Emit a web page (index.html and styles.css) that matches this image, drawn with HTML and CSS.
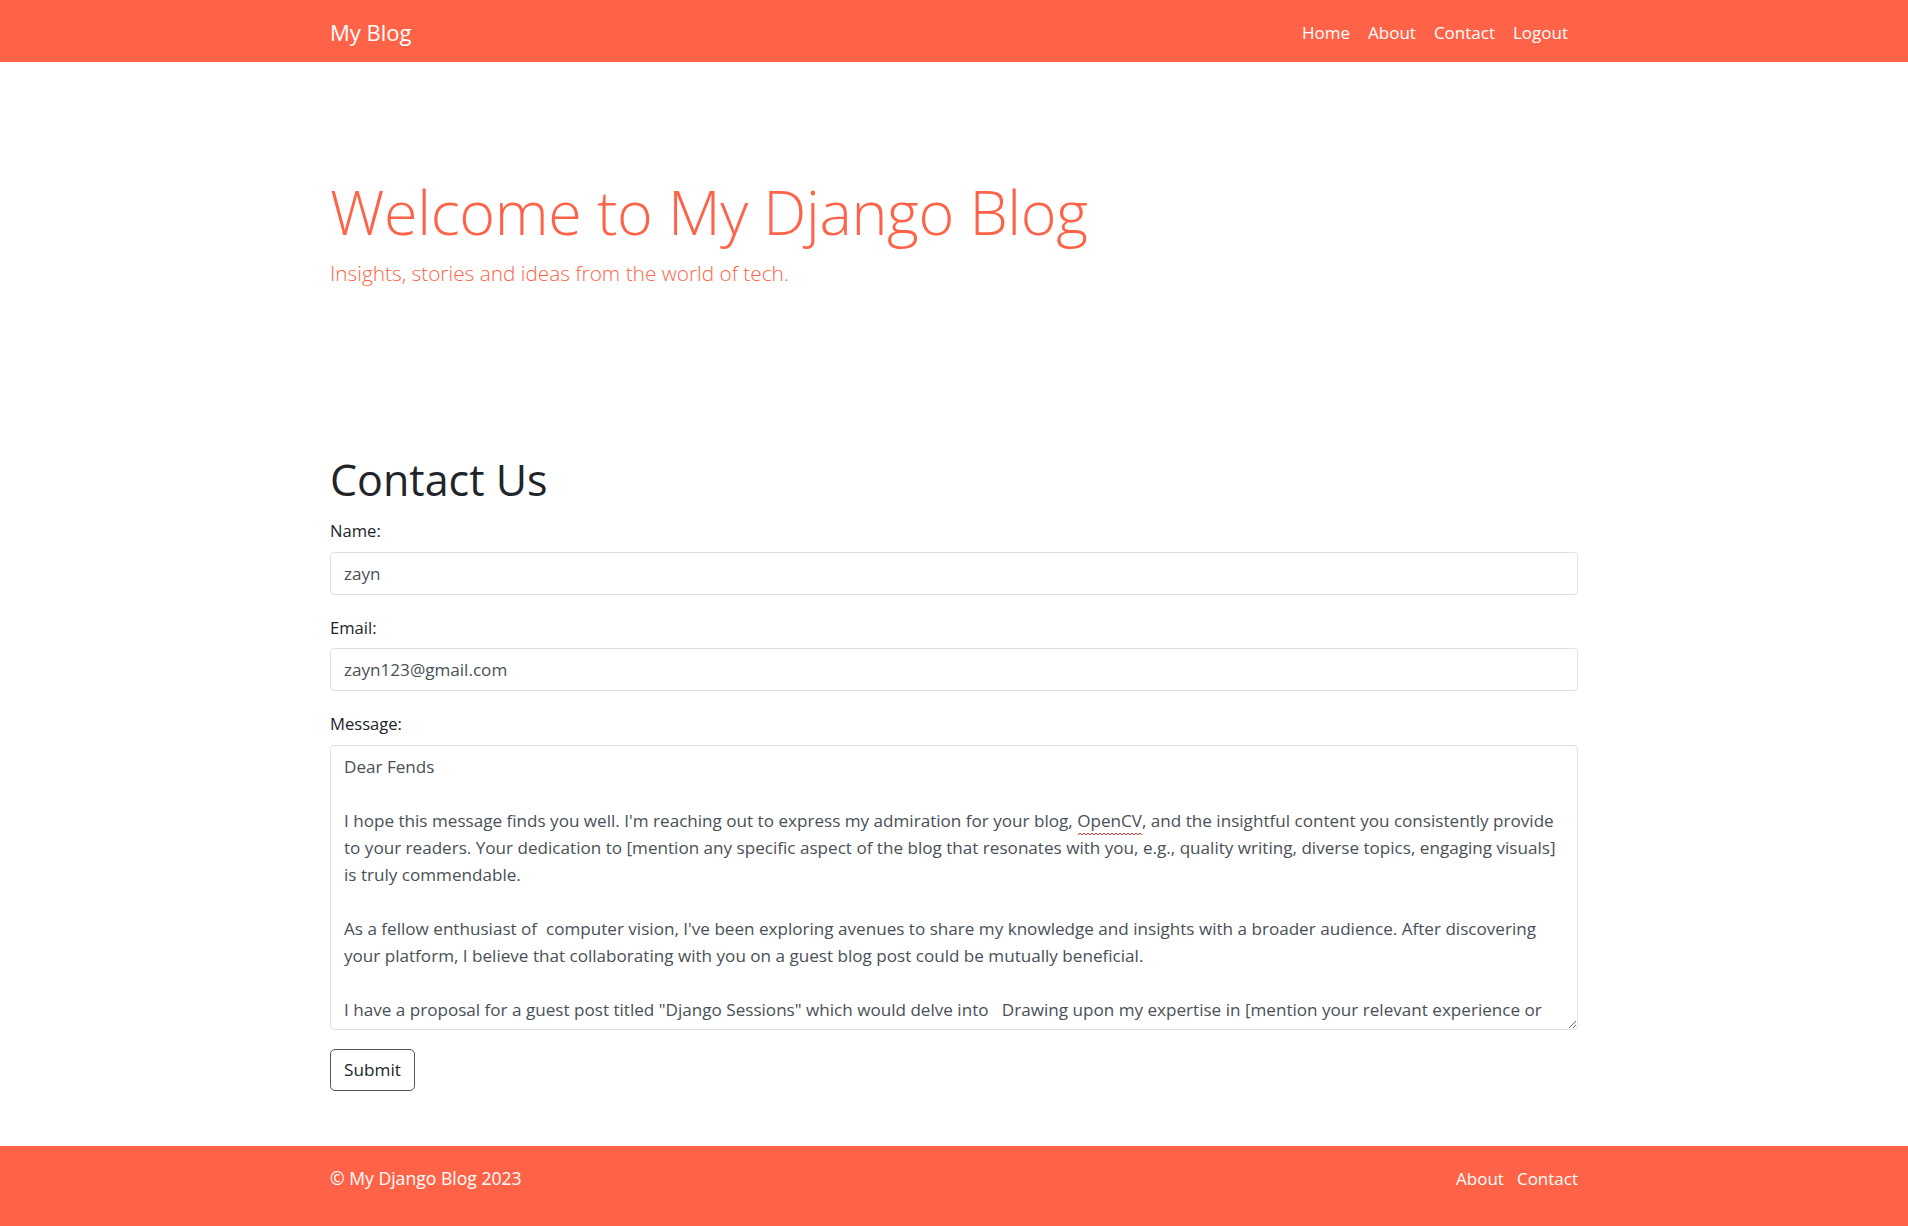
FILE: index.html
```html
<!DOCTYPE html>
<html lang="en">
<head>
<meta charset="utf-8">
<title>Contact - My Blog</title>
<link rel="stylesheet" href="styles.css">
</head>
<body>
<header class="navbar">
  <div class="container navbar-inner">
    <a class="brand" href="#">My Blog</a>
    <nav class="nav">
      <a class="nav-link" href="#">Home</a>
      <a class="nav-link" href="#">About</a>
      <a class="nav-link" href="#">Contact</a>
      <a class="nav-link" href="#">Logout</a>
    </nav>
  </div>
</header>

<section class="hero">
  <div class="container">
    <h1 class="hero-title">Welcome to My Django Blog</h1>
    <p class="hero-lead">Insights, stories and ideas from the world of tech.</p>
  </div>
</section>

<main class="container content">
  <h2 class="page-title">Contact Us</h2>
  <form class="contact-form">
    <div class="field">
      <label class="label" for="name">Name:</label>
      <input class="control" id="name" type="text" value="zayn">
    </div>
    <div class="field">
      <label class="label" for="email">Email:</label>
      <input class="control" id="email" type="email" value="zayn123@gmail.com">
    </div>
    <div class="field field-last">
      <label class="label" for="message">Message:</label>
      <div class="textarea-wrap">
        <textarea class="control textarea" id="message" rows="10" wrap="off" spellcheck="false">Dear Fends

I hope this message finds you well. I'm reaching out to express my admiration for your blog, OpenCV, and the insightful content you consistently provide
to your readers. Your dedication to [mention any specific aspect of the blog that resonates with you, e.g., quality writing, diverse topics, engaging visuals]
is truly commendable.

As a fellow enthusiast of  computer vision, I've been exploring avenues to share my knowledge and insights with a broader audience. After discovering
your platform, I believe that collaborating with you on a guest blog post could be mutually beneficial.

I have a proposal for a guest post titled "Django Sessions" which would delve into   Drawing upon my expertise in [mention your relevant experience or
skills], I am confident that this post would offer valuable insights to your readers.</textarea>
        <svg class="spell" width="64" height="4" viewBox="0 0 64 4" aria-hidden="true">
          <polyline points="0,3 2,1 4,3 6,1 8,3 10,1 12,3 14,1 16,3 18,1 20,3 22,1 24,3 26,1 28,3 30,1 32,3 34,1 36,3 38,1 40,3 42,1 44,3 46,1 48,3 50,1 52,3 54,1 56,3 58,1 60,3 62,1 64,3" fill="none" stroke="#e0332b" stroke-width="1"/>
        </svg>
      </div>
    </div>
    <button class="btn" type="submit">Submit</button>
  </form>
</main>

<footer class="footer">
  <div class="container footer-inner">
    <p class="copy">© My Django Blog 2023</p>
    <nav class="footer-nav">
      <a class="footer-link" href="#">About</a>
      <a class="footer-link" href="#">Contact</a>
    </nav>
  </div>
</footer>
</body>
</html>
```

FILE: styles.css
```css
* { box-sizing: border-box; }

html, body {
  margin: 0;
  padding: 0;
}

body {
  font-family: "Open Sans", "Noto Sans", "Liberation Sans", sans-serif;
  font-size: 17px;
  line-height: 27px;
  color: #212529;
  background: #fff;
}

a { text-decoration: none; }

.container {
  width: 1248px;
  margin: 0 auto;
}

/* navbar */
.navbar {
  background: #ff6347;
  height: 62px;
}
.navbar-inner {
  display: flex;
  align-items: center;
  justify-content: space-between;
  height: 100%;
}
.brand {
  color: #fff;
  font-size: 22px;
  line-height: 30px;
  margin-top: 1px;
}
.nav {
  display: flex;
  margin-right: 1px;
  margin-top: 2px;
}
.nav-link {
  color: #fff;
  font-size: 17px;
  padding: 0 9px;
}

/* hero */
.hero {
  padding: 114px 0 0;
  height: 340px;
}
.hero-title {
  margin: 0;
  font-weight: 300;
  font-size: 61px;
  line-height: 72px;
  color: #ff6347;
  letter-spacing: -0.35px;
}
.hero-lead {
  margin: 10px 0 0;
  font-weight: 300;
  font-size: 20.8px;
  line-height: 30px;
  color: #ff6347;
}

/* content */
.content {
  padding-top: 53px;
  padding-bottom: 55px;
}
.page-title {
  margin: 0 0 14px;
  font-weight: 400;
  font-size: 43px;
  line-height: 50px;
}
.field {
  margin-bottom: 21px;
}
.field-last {
  margin-bottom: 19px;
}
.label {
  display: block;
  font-size: 16.6px;
  line-height: 24px;
  margin-bottom: 8.5px;
}
.control {
  display: block;
  width: 100%;
  height: 43px;
  padding: 7px 13px;
  font-family: inherit;
  font-size: 17.1px;
  line-height: 27px;
  color: #495057;
  background: #fff;
  border: 1px solid #dee2e6;
  border-radius: 4px;
  outline: none;
}
.textarea-wrap {
  position: relative;
}
.textarea {
  height: 285px;
  white-space: pre;
  overflow: hidden;
  resize: vertical;
}
.spell {
  position: absolute;
  left: 748px;
  top: 87px;
  display: block;
}

.btn {
  display: block;
  height: 42px;
  padding: 0 13px;
  font-family: inherit;
  font-size: 17.2px;
  color: #212529;
  background: #fff;
  border: 1.5px solid #555;
  border-radius: 5px;
}

/* footer */
.footer {
  background: #ff6347;
  height: 84px;
}
.footer-inner {
  display: flex;
  justify-content: space-between;
  padding-top: 19px;
}
.copy {
  margin: 0;
  color: #fff;
  font-size: 17.6px;
}
.footer-nav {
  display: flex;
  gap: 13px;
}
.footer-link {
  color: #fff;
  font-size: 17px;
}
```
